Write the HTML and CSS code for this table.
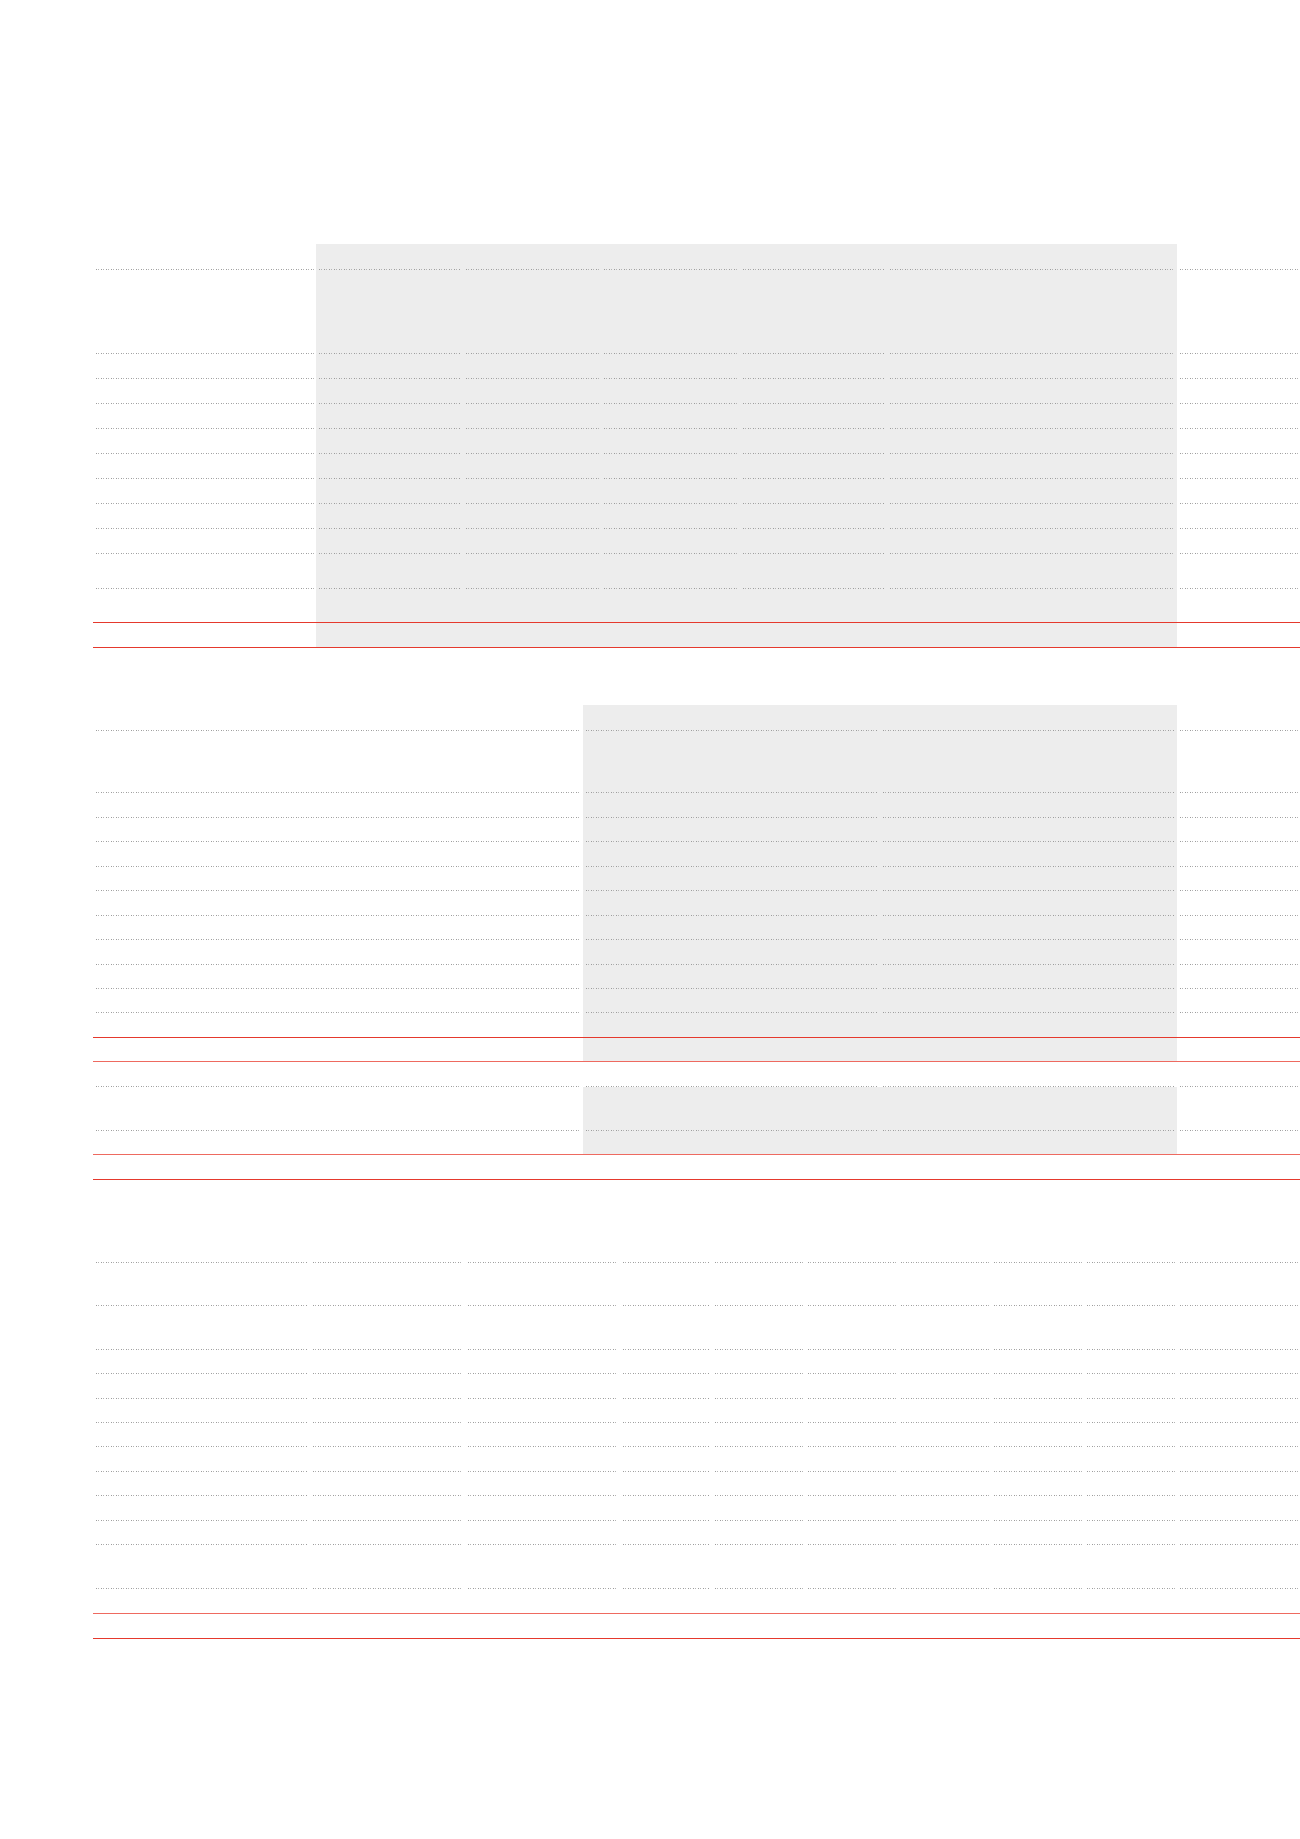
FILE: index.html
```html
<!DOCTYPE html>
<html lang="en">
<head>
<meta charset="utf-8">
<title>Tables</title>
<link rel="stylesheet" href="styles.css">
</head>
<body>
<main class="page">

  <section class="tbl t1">
    <div class="row h26"><div class="c w1"><i class="ln"></i></div><div class="c g w2"><i class="ln"></i></div><div class="c g w3"><i class="ln"></i></div><div class="c g w4"><i class="ln"></i></div><div class="c g w5"><i class="ln"></i></div><div class="c g w6"><i class="ln"></i></div><div class="c w7"><i class="ln"></i></div></div>
    <div class="row h84"><div class="c w1"><i class="ln"></i></div><div class="c g w2"><i class="ln"></i></div><div class="c g w3"><i class="ln"></i></div><div class="c g w4"><i class="ln"></i></div><div class="c g w5"><i class="ln"></i></div><div class="c g w6"><i class="ln"></i></div><div class="c w7"><i class="ln"></i></div></div>
    <div class="row h25"><div class="c w1"><i class="ln"></i></div><div class="c g w2"><i class="ln"></i></div><div class="c g w3"><i class="ln"></i></div><div class="c g w4"><i class="ln"></i></div><div class="c g w5"><i class="ln"></i></div><div class="c g w6"><i class="ln"></i></div><div class="c w7"><i class="ln"></i></div></div>
    <div class="row h25"><div class="c w1"><i class="ln"></i></div><div class="c g w2"><i class="ln"></i></div><div class="c g w3"><i class="ln"></i></div><div class="c g w4"><i class="ln"></i></div><div class="c g w5"><i class="ln"></i></div><div class="c g w6"><i class="ln"></i></div><div class="c w7"><i class="ln"></i></div></div>
    <div class="row h25"><div class="c w1"><i class="ln"></i></div><div class="c g w2"><i class="ln"></i></div><div class="c g w3"><i class="ln"></i></div><div class="c g w4"><i class="ln"></i></div><div class="c g w5"><i class="ln"></i></div><div class="c g w6"><i class="ln"></i></div><div class="c w7"><i class="ln"></i></div></div>
    <div class="row h25"><div class="c w1"><i class="ln"></i></div><div class="c g w2"><i class="ln"></i></div><div class="c g w3"><i class="ln"></i></div><div class="c g w4"><i class="ln"></i></div><div class="c g w5"><i class="ln"></i></div><div class="c g w6"><i class="ln"></i></div><div class="c w7"><i class="ln"></i></div></div>
    <div class="row h25"><div class="c w1"><i class="ln"></i></div><div class="c g w2"><i class="ln"></i></div><div class="c g w3"><i class="ln"></i></div><div class="c g w4"><i class="ln"></i></div><div class="c g w5"><i class="ln"></i></div><div class="c g w6"><i class="ln"></i></div><div class="c w7"><i class="ln"></i></div></div>
    <div class="row h25"><div class="c w1"><i class="ln"></i></div><div class="c g w2"><i class="ln"></i></div><div class="c g w3"><i class="ln"></i></div><div class="c g w4"><i class="ln"></i></div><div class="c g w5"><i class="ln"></i></div><div class="c g w6"><i class="ln"></i></div><div class="c w7"><i class="ln"></i></div></div>
    <div class="row h25"><div class="c w1"><i class="ln"></i></div><div class="c g w2"><i class="ln"></i></div><div class="c g w3"><i class="ln"></i></div><div class="c g w4"><i class="ln"></i></div><div class="c g w5"><i class="ln"></i></div><div class="c g w6"><i class="ln"></i></div><div class="c w7"><i class="ln"></i></div></div>
    <div class="row h25"><div class="c w1"><i class="ln"></i></div><div class="c g w2"><i class="ln"></i></div><div class="c g w3"><i class="ln"></i></div><div class="c g w4"><i class="ln"></i></div><div class="c g w5"><i class="ln"></i></div><div class="c g w6"><i class="ln"></i></div><div class="c w7"><i class="ln"></i></div></div>
    <div class="row h35"><div class="c w1"><i class="ln"></i></div><div class="c g w2"><i class="ln"></i></div><div class="c g w3"><i class="ln"></i></div><div class="c g w4"><i class="ln"></i></div><div class="c g w5"><i class="ln"></i></div><div class="c g w6"><i class="ln"></i></div><div class="c w7"><i class="ln"></i></div></div>
    <div class="row red h34"><div class="c w1"></div><div class="c g w2"></div><div class="c g w3"></div><div class="c g w4"></div><div class="c g w5"></div><div class="c g w6"></div><div class="c w7"></div></div>
    <div class="row red h25"><div class="c w1"></div><div class="c g w2"></div><div class="c g w3"></div><div class="c g w4"></div><div class="c g w5"></div><div class="c g w6"></div><div class="c w7"></div></div>
  </section>

  <section class="tbl t2">
    <div class="row h26"><div class="c w1"><i class="ln"></i></div><div class="c g w2"><i class="ln"></i></div><div class="c g w3"><i class="ln"></i></div><div class="c w4"><i class="ln"></i></div></div>
    <div class="row h62"><div class="c w1"><i class="ln"></i></div><div class="c g w2"><i class="ln"></i></div><div class="c g w3"><i class="ln"></i></div><div class="c w4"><i class="ln"></i></div></div>
    <div class="row h25"><div class="c w1"><i class="ln"></i></div><div class="c g w2"><i class="ln"></i></div><div class="c g w3"><i class="ln"></i></div><div class="c w4"><i class="ln"></i></div></div>
    <div class="row h24"><div class="c w1"><i class="ln"></i></div><div class="c g w2"><i class="ln"></i></div><div class="c g w3"><i class="ln"></i></div><div class="c w4"><i class="ln"></i></div></div>
    <div class="row h25"><div class="c w1"><i class="ln"></i></div><div class="c g w2"><i class="ln"></i></div><div class="c g w3"><i class="ln"></i></div><div class="c w4"><i class="ln"></i></div></div>
    <div class="row h24"><div class="c w1"><i class="ln"></i></div><div class="c g w2"><i class="ln"></i></div><div class="c g w3"><i class="ln"></i></div><div class="c w4"><i class="ln"></i></div></div>
    <div class="row h25"><div class="c w1"><i class="ln"></i></div><div class="c g w2"><i class="ln"></i></div><div class="c g w3"><i class="ln"></i></div><div class="c w4"><i class="ln"></i></div></div>
    <div class="row h24"><div class="c w1"><i class="ln"></i></div><div class="c g w2"><i class="ln"></i></div><div class="c g w3"><i class="ln"></i></div><div class="c w4"><i class="ln"></i></div></div>
    <div class="row h25"><div class="c w1"><i class="ln"></i></div><div class="c g w2"><i class="ln"></i></div><div class="c g w3"><i class="ln"></i></div><div class="c w4"><i class="ln"></i></div></div>
    <div class="row h24"><div class="c w1"><i class="ln"></i></div><div class="c g w2"><i class="ln"></i></div><div class="c g w3"><i class="ln"></i></div><div class="c w4"><i class="ln"></i></div></div>
    <div class="row h24"><div class="c w1"><i class="ln"></i></div><div class="c g w2"><i class="ln"></i></div><div class="c g w3"><i class="ln"></i></div><div class="c w4"><i class="ln"></i></div></div>
    <div class="row red h25"><div class="c w1"></div><div class="c g w2"></div><div class="c g w3"></div><div class="c w4"></div></div>
    <div class="row red soft h24"><div class="c w1"></div><div class="c g w2"></div><div class="c g w3"></div><div class="c w4"></div></div>
    <div class="row h25"><div class="c w1"><i class="ln"></i></div><div class="c w2"><i class="ln"></i></div><div class="c w3"><i class="ln"></i></div><div class="c w4"><i class="ln"></i></div></div>
    <div class="row h44"><div class="c w1"><i class="ln"></i></div><div class="c g w2"><i class="ln"></i></div><div class="c g w3"><i class="ln"></i></div><div class="c w4"><i class="ln"></i></div></div>
    <div class="row red soft h24"><div class="c w1"></div><div class="c g w2"></div><div class="c g w3"></div><div class="c w4"></div></div>
    <div class="row red h25"><div class="c w1"></div><div class="c w2"></div><div class="c w3"></div><div class="c w4"></div></div>
  </section>

  <section class="tbl t3">
    <div class="row h26"><div class="c w1"><i class="ln"></i></div><div class="c w2"><i class="ln"></i></div><div class="c w3"><i class="ln"></i></div><div class="c w4"><i class="ln"></i></div><div class="c w5"><i class="ln"></i></div><div class="c w6"><i class="ln"></i></div><div class="c w7"><i class="ln"></i></div><div class="c w8"><i class="ln"></i></div><div class="c w9"><i class="ln"></i></div><div class="c w10"><i class="ln"></i></div></div>
    <div class="row h43"><div class="c w1"><i class="ln"></i></div><div class="c w2"><i class="ln"></i></div><div class="c w3"><i class="ln"></i></div><div class="c w4"><i class="ln"></i></div><div class="c w5"><i class="ln"></i></div><div class="c w6"><i class="ln"></i></div><div class="c w7"><i class="ln"></i></div><div class="c w8"><i class="ln"></i></div><div class="c w9"><i class="ln"></i></div><div class="c w10"><i class="ln"></i></div></div>
    <div class="row h44"><div class="c w1"><i class="ln"></i></div><div class="c w2"><i class="ln"></i></div><div class="c w3"><i class="ln"></i></div><div class="c w4"><i class="ln"></i></div><div class="c w5"><i class="ln"></i></div><div class="c w6"><i class="ln"></i></div><div class="c w7"><i class="ln"></i></div><div class="c w8"><i class="ln"></i></div><div class="c w9"><i class="ln"></i></div><div class="c w10"><i class="ln"></i></div></div>
    <div class="row h24"><div class="c w1"><i class="ln"></i></div><div class="c w2"><i class="ln"></i></div><div class="c w3"><i class="ln"></i></div><div class="c w4"><i class="ln"></i></div><div class="c w5"><i class="ln"></i></div><div class="c w6"><i class="ln"></i></div><div class="c w7"><i class="ln"></i></div><div class="c w8"><i class="ln"></i></div><div class="c w9"><i class="ln"></i></div><div class="c w10"><i class="ln"></i></div></div>
    <div class="row h25"><div class="c w1"><i class="ln"></i></div><div class="c w2"><i class="ln"></i></div><div class="c w3"><i class="ln"></i></div><div class="c w4"><i class="ln"></i></div><div class="c w5"><i class="ln"></i></div><div class="c w6"><i class="ln"></i></div><div class="c w7"><i class="ln"></i></div><div class="c w8"><i class="ln"></i></div><div class="c w9"><i class="ln"></i></div><div class="c w10"><i class="ln"></i></div></div>
    <div class="row h24"><div class="c w1"><i class="ln"></i></div><div class="c w2"><i class="ln"></i></div><div class="c w3"><i class="ln"></i></div><div class="c w4"><i class="ln"></i></div><div class="c w5"><i class="ln"></i></div><div class="c w6"><i class="ln"></i></div><div class="c w7"><i class="ln"></i></div><div class="c w8"><i class="ln"></i></div><div class="c w9"><i class="ln"></i></div><div class="c w10"><i class="ln"></i></div></div>
    <div class="row h24"><div class="c w1"><i class="ln"></i></div><div class="c w2"><i class="ln"></i></div><div class="c w3"><i class="ln"></i></div><div class="c w4"><i class="ln"></i></div><div class="c w5"><i class="ln"></i></div><div class="c w6"><i class="ln"></i></div><div class="c w7"><i class="ln"></i></div><div class="c w8"><i class="ln"></i></div><div class="c w9"><i class="ln"></i></div><div class="c w10"><i class="ln"></i></div></div>
    <div class="row h25"><div class="c w1"><i class="ln"></i></div><div class="c w2"><i class="ln"></i></div><div class="c w3"><i class="ln"></i></div><div class="c w4"><i class="ln"></i></div><div class="c w5"><i class="ln"></i></div><div class="c w6"><i class="ln"></i></div><div class="c w7"><i class="ln"></i></div><div class="c w8"><i class="ln"></i></div><div class="c w9"><i class="ln"></i></div><div class="c w10"><i class="ln"></i></div></div>
    <div class="row h24"><div class="c w1"><i class="ln"></i></div><div class="c w2"><i class="ln"></i></div><div class="c w3"><i class="ln"></i></div><div class="c w4"><i class="ln"></i></div><div class="c w5"><i class="ln"></i></div><div class="c w6"><i class="ln"></i></div><div class="c w7"><i class="ln"></i></div><div class="c w8"><i class="ln"></i></div><div class="c w9"><i class="ln"></i></div><div class="c w10"><i class="ln"></i></div></div>
    <div class="row h25"><div class="c w1"><i class="ln"></i></div><div class="c w2"><i class="ln"></i></div><div class="c w3"><i class="ln"></i></div><div class="c w4"><i class="ln"></i></div><div class="c w5"><i class="ln"></i></div><div class="c w6"><i class="ln"></i></div><div class="c w7"><i class="ln"></i></div><div class="c w8"><i class="ln"></i></div><div class="c w9"><i class="ln"></i></div><div class="c w10"><i class="ln"></i></div></div>
    <div class="row h24"><div class="c w1"><i class="ln"></i></div><div class="c w2"><i class="ln"></i></div><div class="c w3"><i class="ln"></i></div><div class="c w4"><i class="ln"></i></div><div class="c w5"><i class="ln"></i></div><div class="c w6"><i class="ln"></i></div><div class="c w7"><i class="ln"></i></div><div class="c w8"><i class="ln"></i></div><div class="c w9"><i class="ln"></i></div><div class="c w10"><i class="ln"></i></div></div>
    <div class="row h44"><div class="c w1"><i class="ln"></i></div><div class="c w2"><i class="ln"></i></div><div class="c w3"><i class="ln"></i></div><div class="c w4"><i class="ln"></i></div><div class="c w5"><i class="ln"></i></div><div class="c w6"><i class="ln"></i></div><div class="c w7"><i class="ln"></i></div><div class="c w8"><i class="ln"></i></div><div class="c w9"><i class="ln"></i></div><div class="c w10"><i class="ln"></i></div></div>
    <div class="row red soft h25"><div class="c w1"></div><div class="c w2"></div><div class="c w3"></div><div class="c w4"></div><div class="c w5"></div><div class="c w6"></div><div class="c w7"></div><div class="c w8"></div><div class="c w9"></div><div class="c w10"></div></div>
    <div class="row red h25"><div class="c w1"></div><div class="c w2"></div><div class="c w3"></div><div class="c w4"></div><div class="c w5"></div><div class="c w6"></div><div class="c w7"></div><div class="c w8"></div><div class="c w9"></div><div class="c w10"></div></div>
  </section>

</main>
</body>
</html>
```

FILE: styles.css
```css
html, body {
  margin: 0;
  padding: 0;
  background: #ffffff;
  font-family: "Liberation Sans", Arial, sans-serif;
}

.page {
  padding: 244px 0 0 93px;
  width: 1207px;
}

.tbl {
  display: flex;
  flex-direction: column;
  width: 1207px;
}

.tbl + .tbl {
  margin-top: 57px;
}

.row {
  display: flex;
  box-sizing: border-box;
}

.row.red {
  border-bottom: 1px solid #e5392d;
}

.row.red.soft {
  border-bottom-color: #ee6a60;
}

.h24 { height: 24px; }
.h25 { height: 25px; }
.h26 { height: 26px; }
.h34 { height: 34px; }
.h35 { height: 35px; }
.h43 { height: 43px; }
.h44 { height: 44px; }
.h62 { height: 62px; }
.h84 { height: 84px; }

.c {
  flex: none;
  display: flex;
  box-sizing: border-box;
  padding: 0 2px 0 3px;
}

.c.g {
  background: #ededed;
}

/* dotted rule: 2 dots per 5px, like the reference's slightly open dotting */
.ln {
  flex: 1;
  display: block;
  background-image: linear-gradient(to right,
    #9c9c9c 0, #9c9c9c 1px,
    transparent 1px, transparent 2px,
    #b4b4b4 2px, #b4b4b4 3px,
    transparent 3px, transparent 5px);
  background-size: 5px 1px;
  background-repeat: repeat-x;
  background-position: left bottom;
}

/* table 1 columns */
.t1 .w1 { width: 223px; }
.t1 .w2 { width: 147px; }
.t1 .w3 { width: 138px; }
.t1 .w4 { width: 139px; }
.t1 .w5 { width: 147px; }
.t1 .w6 { width: 290px; }
.t1 .w7 { width: 123px; }

/* table 2 columns */
.t2 .w1 { width: 490px; }
.t2 .w2 { width: 297px; }
.t2 .w3 { width: 297px; }
.t2 .w4 { width: 123px; }

/* table 3 columns */
.t3 .w1 { width: 217px; }
.t3 .w2 { width: 155px; }
.t3 .w3 { width: 155px; }
.t3 .w4 { width: 92px; }
.t3 .w5 { width: 93px; }
.t3 .w6 { width: 93px; }
.t3 .w7 { width: 93px; }
.t3 .w8 { width: 93px; }
.t3 .w9 { width: 93px; }
.t3 .w10 { width: 123px; }
```
